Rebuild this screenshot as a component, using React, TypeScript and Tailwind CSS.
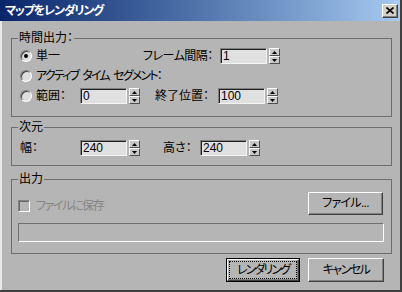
import React from 'react';

const Field = ({ value }: { value: string }) => (
  <div className="flex h-[16px] w-[47px] items-center border border-t-[#808080] border-l-[#808080] border-r-[#f4f4f4] border-b-[#f4f4f4] bg-[#e0e0e0] pl-[2px] text-[12px] leading-[12px] shadow-[inset_1px_1px_0_#202020]">
    {value}
  </div>
);

const Spinner = () => (
  <div className="flex h-[16px] w-[11px] flex-col">
    <div className="flex h-[8px] items-center justify-center border border-t-white border-l-white border-r-[#505050] border-b-[#505050] bg-[#c8c8c8]">
      <svg width="5" height="3" viewBox="0 0 5 3">
        <path d="M2.5 0L5 3H0z" fill="#000" />
      </svg>
    </div>
    <div className="flex h-[8px] items-center justify-center border border-t-white border-l-white border-r-[#505050] border-b-[#505050] bg-[#c8c8c8]">
      <svg width="5" height="3" viewBox="0 0 5 3">
        <path d="M0 0H5L2.5 3z" fill="#000" />
      </svg>
    </div>
  </div>
);

const SpinField = ({ value }: { value: string }) => (
  <div className="flex items-center gap-[2px]">
    <Field value={value} />
    <Spinner />
  </div>
);

const Radio = ({ checked = false }: { checked?: boolean }) => (
  <span className="flex h-[12px] w-[12px] flex-none items-center justify-center rounded-full border border-t-[#808080] border-l-[#808080] border-r-white border-b-white bg-[#dedede] shadow-[inset_1px_1px_0_#404040]">
    {checked && <span className="h-[4px] w-[4px] rounded-full bg-black" />}
  </span>
);

const raised =
  'border border-t-white border-l-white border-r-[#404040] border-b-[#404040] shadow-[inset_-1px_-1px_0_#808080]';

export default function App() {
  return (
    <div className="flex h-[292px] w-[402px] flex-col border-r-2 border-b-2 border-r-[#404040] border-b-[#404040] bg-[#b5b5b5] font-['Liberation_Sans','Noto_Sans_CJK_JP',sans-serif] text-[12px] text-black [font-feature-settings:'palt']">
      <div className="flex h-[21px] flex-none items-center justify-between bg-gradient-to-r from-[#0a246a] to-[#a6caf0] pl-[5px] pr-[2px]">
        <span className="text-[12px] leading-[12px] font-bold tracking-[-1.2px] text-white">マップをレンダリング</span>
        <span className={'flex h-[14px] w-[16px] items-center justify-center bg-[#d4d0c8] ' + raised}>
          <svg width="8" height="7" viewBox="0 0 8 7">
            <path d="M0.5 0.5L7.5 6.5M7.5 0.5L0.5 6.5" stroke="#000" strokeWidth="1.6" />
          </svg>
        </span>
      </div>

      <div className="flex flex-1 flex-col border-l-2 border-l-[#e8e8e8] pl-[9px] pr-[8px] pt-[11px]">
        {/* time output */}
        <fieldset className="border border-[#6e6e6e] pb-[10px] pl-[6px] pr-[7px] pt-[2px]">
          <legend className="px-[1px] text-[12px] leading-[12px]">時間出力：</legend>
          <div className="flex h-[20px] items-center">
            <div className="flex w-[125px] items-center gap-[4px] pl-[2px]">
              <Radio checked />
              <span>単一</span>
            </div>
            <span className="w-[77px] tracking-[-0.5px]">フレーム間隔：</span>
            <SpinField value="1" />
          </div>
          <div className="flex h-[20px] items-center">
            <div className="flex items-center gap-[4px] pl-[2px]">
              <Radio />
              <span className="flex gap-[4px] tracking-[-1.8px]">
                <span>アクティブ</span>
                <span>タイム</span>
                <span>セグメント：</span>
              </span>
            </div>
          </div>
          <div className="flex h-[20px] items-center">
            <div className="flex w-[62px] items-center gap-[4px] pl-[2px]">
              <Radio />
              <span>範囲：</span>
            </div>
            <SpinField value="0" />
            <span className="w-[78px] pl-[15px]">終了位置：</span>
            <SpinField value="100" />
          </div>
        </fieldset>

        {/* dimensions */}
        <fieldset className="mt-[4px] border border-[#6e6e6e] pb-[7px] pl-[6px] pr-[7px] pt-[5px]">
          <legend className="px-[1px] text-[12px] leading-[12px]">次元</legend>
          <div className="flex h-[20px] items-center">
            <span className="w-[62px] pl-[2px]">幅：</span>
            <SpinField value="240" />
            <span className="w-[60px] pl-[23px]">高さ：</span>
            <SpinField value="240" />
          </div>
        </fieldset>

        {/* output */}
        <fieldset className="mt-[7px] border border-[#6e6e6e] pb-[11px] pl-[6px] pr-[7px] pt-[7px]">
          <legend className="px-[1px] text-[12px] leading-[12px]">出力</legend>
          <div className="flex items-start">
            <div className="mt-[8px] flex items-center gap-[6px]">
              <span className="h-[12px] w-[12px] border border-t-[#808080] border-l-[#808080] border-r-white border-b-white shadow-[inset_1px_1px_0_#6a6a6a]" />
              <span className="leading-[12px] tracking-[-1.4px] text-[#858585]">ファイルに保存</span>
            </div>
            <button
              type="button"
              className={'ml-auto mr-[1px] flex h-[23px] w-[75px] items-center justify-center pb-[1px] text-[12px] leading-[12px] tracking-[-0.7px] ' + raised}
            >
              ファイル...
            </button>
          </div>
          <div className="mt-[8px] h-[19px] w-full border border-t-[#707070] border-l-[#707070] border-r-white border-b-white" />
        </fieldset>

        <div className="mr-[8px] mt-[4px] flex justify-end gap-[8px]">
          <button type="button" className="h-[24px] w-[74px] border border-black">
            <div className={'flex h-full w-full p-[2px] ' + raised}>
              <span className="flex flex-1 items-center justify-center text-[12px] leading-[12px] tracking-[-1.9px] outline-1 outline-dotted outline-black">
                レンダリング
              </span>
            </div>
          </button>
          <button
            type="button"
            className={'flex h-[24px] w-[76px] items-center justify-center text-[12px] leading-[12px] tracking-[-1.5px] ' + raised}
          >
            キャンセル
          </button>
        </div>
      </div>
    </div>
  );
}
